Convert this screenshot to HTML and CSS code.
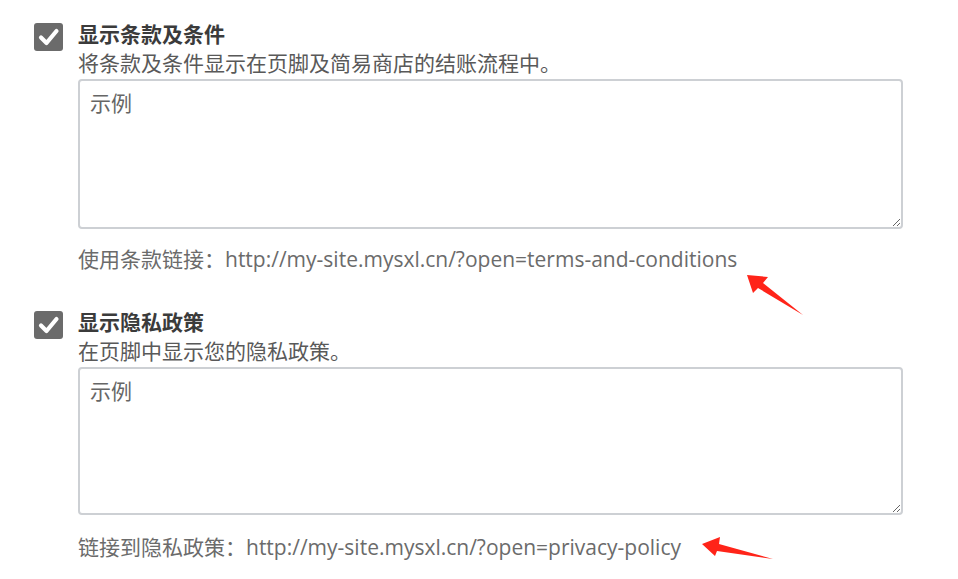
FILE: index.html
```html
<!DOCTYPE html>
<html lang="zh-CN">
<head>
    <meta charset="UTF-8">
    <title>页脚设置</title>
    <link rel="stylesheet" href="styles.css">
</head>
<body>
    <div class="settings">
        <div class="option">
            <span class="check">
                <svg width="29" height="28" viewBox="0 0 29 28"><path d="M7 14.5 L12.5 20 L22.5 8" fill="none" stroke="#fff" stroke-width="4.2" stroke-linecap="round" stroke-linejoin="round"/></svg>
            </span>
            <div class="option-body">
                <div class="option-title">显示条款及条件</div>
                <div class="option-desc">将条款及条件显示在页脚及简易商店的结账流程中。</div>
                <textarea class="field" placeholder="示例"></textarea>
                <div class="link-note">使用条款链接：http://my-site.mysxl.cn/?open=terms-and-conditions</div>
            </div>
        </div>

        <div class="option second">
            <span class="check">
                <svg width="29" height="28" viewBox="0 0 29 28"><path d="M7 14.5 L12.5 20 L22.5 8" fill="none" stroke="#fff" stroke-width="4.2" stroke-linecap="round" stroke-linejoin="round"/></svg>
            </span>
            <div class="option-body">
                <div class="option-title">显示隐私政策</div>
                <div class="option-desc">在页脚中显示您的隐私政策。</div>
                <textarea class="field short" placeholder="示例"></textarea>
                <div class="link-note">链接到隐私政策：http://my-site.mysxl.cn/?open=privacy-policy</div>
            </div>
        </div>
    </div>

    <!-- annotation arrows -->
    <svg class="marks" width="958" height="579" viewBox="0 0 958 579">
        <polygon points="747,275 768,277 763,283 803,315 758,288 753,293" fill="#ff2419"/>
        <polygon points="702,544 720,537 719,544 773,559 717,551 715,556" fill="#ff2419"/>
    </svg>
</body>
</html>
```

FILE: styles.css
```css
html, body {
    margin: 0;
    padding: 0;
    background: #fff;
}
body {
    font-family: "Open Sans", "Noto Sans CJK SC", sans-serif;
    width: 958px;
    height: 579px;
    position: relative;
    overflow: hidden;
}
.settings {
    padding: 19px 0 0 34px;
}
.option {
    display: flex;
    gap: 15px;
}
.option.second {
    margin-top: 33px;
}
.check {
    width: 29px;
    height: 28px;
    margin-top: 4px;
    background: #6b6b6b;
    border-radius: 3px;
    flex-shrink: 0;
}
.check svg {
    display: block;
}
.option-body {
    width: 825px;
}
.option-title {
    font-size: 21px;
    line-height: 30px;
    font-weight: bold;
    color: #3b3b3b;
}
.option-desc {
    font-size: 21px;
    line-height: 28px;
    color: #595959;
}
.field {
    display: block;
    box-sizing: border-box;
    width: 825px;
    height: 150px;
    margin-top: 2px;
    padding: 8px 10px;
    border: 2px solid #cdd0d4;
    border-radius: 4px;
    font-family: inherit;
    font-size: 21px;
    line-height: 28px;
    color: #555;
    resize: vertical;
}
.field.short {
    height: 148px;
}
.field::placeholder {
    color: #666;
}
.link-note {
    margin-top: 15px;
    font-size: 21px;
    line-height: 30px;
    color: #6b6b6b;
}
.second .link-note {
    margin-top: 17px;
}
.marks {
    position: absolute;
    left: 0;
    top: 0;
    pointer-events: none;
}
```
